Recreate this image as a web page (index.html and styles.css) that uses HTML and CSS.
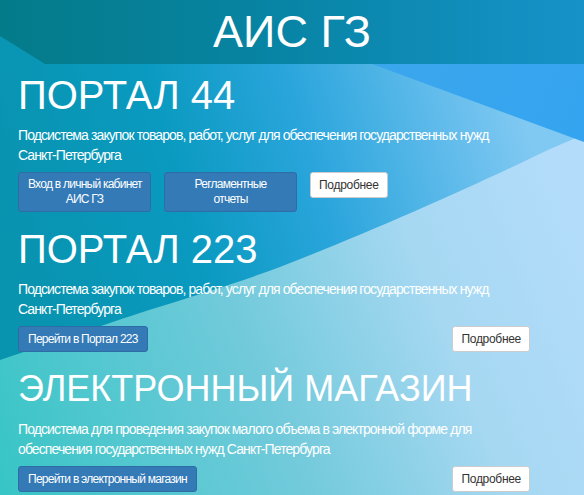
FILE: index.html
```html
<!DOCTYPE html>
<html lang="ru">
<head>
<meta charset="utf-8">
<title>АИС ГЗ</title>
<link rel="stylesheet" href="styles.css">
</head>
<body>
<div class="stage">
  <svg class="bg" width="584" height="495" viewBox="0 0 584 495" aria-hidden="true">
    <defs>
      <linearGradient id="gDark" gradientUnits="userSpaceOnUse" x1="0" y1="250" x2="520" y2="100">
        <stop offset="0" stop-color="#0893ae"/>
        <stop offset="0.35" stop-color="#0a9ac0"/>
        <stop offset="0.6" stop-color="#2aa5dc"/>
        <stop offset="0.9" stop-color="#6cc0ee"/>
        <stop offset="1" stop-color="#80c9f2"/>
      </linearGradient>
      <linearGradient id="gLight" gradientUnits="userSpaceOnUse" x1="0" y1="480" x2="584" y2="250">
        <stop offset="0" stop-color="#38c5c5"/>
        <stop offset="0.45" stop-color="#72cadb"/>
        <stop offset="0.75" stop-color="#a6d8f2"/>
        <stop offset="1" stop-color="#b2dcfa"/>
      </linearGradient>
      <linearGradient id="gHead" gradientUnits="userSpaceOnUse" x1="0" y1="0" x2="584" y2="0">
        <stop offset="0" stop-color="#047b89"/>
        <stop offset="0.5" stop-color="#0885a6"/>
        <stop offset="1" stop-color="#1792c9"/>
      </linearGradient>
      <linearGradient id="gTri" gradientUnits="userSpaceOnUse" x1="380" y1="64" x2="584" y2="140">
        <stop offset="0" stop-color="#3aa6ec"/>
        <stop offset="1" stop-color="#35a4f0"/>
      </linearGradient>
    </defs>
    <rect x="0" y="0" width="584" height="495" fill="url(#gLight)"/>
    <path d="M0,0 L584,0 L584,135 C567,141 550,149 527,160 C460,192 370,232 280,267 C240,282 200,294 149,310 C100,326 60,340 0,360 Z" fill="url(#gDark)"/>
    <path d="M372,64 L584,64 L584,142 Z" fill="url(#gTri)"/>
    <path d="M0,0 L584,0 L584,64 L45,64 L0,36 Z" fill="url(#gHead)"/>
  </svg>
  <div class="page">
    <header class="top">
      <h1 class="brand">АИС ГЗ</h1>
    </header>
    <section class="block block-first">
      <h2 class="title">ПОРТАЛ 44</h2>
      <p class="desc">Подсистема закупок товаров, работ, услуг для обеспечения государственных нужд <span class="nobr">Санкт-Петербурга</span></p>
      <div class="actions">
        <a class="btn btn-primary btn-wide" href="#">Вход в личный кабинет<br>АИС ГЗ</a>
        <a class="btn btn-primary btn-wide" href="#">Регламентные<br>отчеты</a>
        <a class="btn btn-default" href="#">Подробнее</a>
      </div>
    </section>
    <section class="block">
      <h2 class="title">ПОРТАЛ 223</h2>
      <p class="desc">Подсистема закупок товаров, работ, услуг для обеспечения государственных нужд <span class="nobr">Санкт-Петербурга</span></p>
      <div class="actions actions-split">
        <a class="btn btn-primary" href="#">Перейти в Портал 223</a>
        <a class="btn btn-default" href="#">Подробнее</a>
      </div>
    </section>
    <section class="block">
      <h2 class="title title-small">ЭЛЕКТРОННЫЙ МАГАЗИН</h2>
      <p class="desc">Подсистема для проведения закупок малого объема в электронной форме для обеспечения государственных нужд Санкт-Петербурга</p>
      <div class="actions actions-split">
        <a class="btn btn-primary" href="#">Перейти в электронный магазин</a>
        <a class="btn btn-default" href="#">Подробнее</a>
      </div>
    </section>
  </div>
</div>
</body>
</html>
```
FILE: styles.css
```css
html, body {
  margin: 0;
  padding: 0;
}
body {
  font-family: "Liberation Sans", Arial, sans-serif;
  overflow: hidden;
  background: #3cc4c6;
}
.stage {
  display: grid;
  width: 584px;
  min-height: 495px;
}
.stage > * {
  grid-area: 1 / 1;
}
.bg {
  display: block;
  width: 584px;
  height: 495px;
}
.page {
  color: #fff;
}
.top {
  height: 64px;
  text-align: center;
}
.brand {
  margin: 0;
  font-size: 45px;
  line-height: 64px;
  font-weight: normal;
}
.block {
  padding: 0 18px;
  margin-top: 15px;
}
.block-first {
  margin-top: 9px;
}
.title {
  margin: 0 0 8px;
  font-size: 40px;
  line-height: 44px;
  font-weight: normal;
}
.title-small {
  font-size: 36px;
  line-height: 44px;
}
.desc {
  margin: 0 0 7px;
  width: 512px;
  font-size: 14px;
  line-height: 20px;
  letter-spacing: -0.9px;
}
.nobr {
  white-space: nowrap;
}
.actions {
  display: flex;
  align-items: flex-start;
  gap: 13px;
  width: 512px;
}
.actions-split {
  justify-content: space-between;
}
.btn {
  display: inline-block;
  flex: none;
  box-sizing: border-box;
  padding: 4px 9px;
  border: 1px solid transparent;
  border-radius: 3px;
  font-size: 12px;
  line-height: 16px;
  text-align: center;
  text-decoration: none;
  white-space: nowrap;
}
.btn-primary {
  background: #337ab7;
  border-color: #2e6da4;
  color: #fff;
  letter-spacing: -0.75px;
}
.btn-wide {
  width: 133px;
  line-height: 15px;
}
.btn-default {
  padding: 4px 8px;
  background: #fff;
  border-color: #ccc;
  color: #333;
  letter-spacing: -0.3px;
}
```
